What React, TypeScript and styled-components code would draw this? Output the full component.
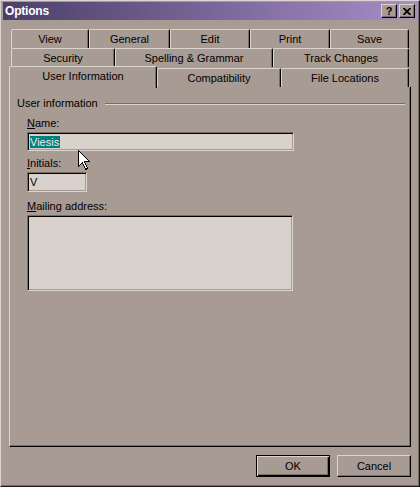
import styled, { createGlobalStyle } from 'styled-components';

const face = '#a89b93';
const light = '#dcd4cf';
const shadow = '#7a6d66';
const dark = '#000';
const fieldBg = '#d9d1cc';

const GlobalStyle = createGlobalStyle`
	html, body {
		margin: 0;
		padding: 0;
		background: ${face};
	}
	body {
		font-family: 'Liberation Sans', Arial, sans-serif;
		font-size: 11px;
		color: #000;
	}
`;

const tabRows: { label: string; w: number }[][] = [
	[
		{ label: 'View', w: 78 },
		{ label: 'General', w: 81 },
		{ label: 'Edit', w: 80 },
		{ label: 'Print', w: 80 },
		{ label: 'Save', w: 79 },
	],
	[
		{ label: 'Security', w: 104 },
		{ label: 'Spelling & Grammar', w: 158 },
		{ label: 'Track Changes', w: 136 },
	],
];

const frontRow = [
	{ label: 'User Information', w: 148, active: true },
	{ label: 'Compatibility', w: 124 },
	{ label: 'File Locations', w: 128 },
];

function Cursor() {
	return (
		<Pointer width='13' height='21' viewBox='0 0 13 21'>
			<path
				d='M0.5 0.5 L0.5 16.5 L4.5 12.5 L7.5 19.5 L9.5 18.5 L6.5 11.5 L11.5 11.5 Z'
				fill='#fff'
				stroke='#000'
				strokeWidth='1'
				shapeRendering='crispEdges'
			/>
		</Pointer>
	);
}

function App() {
	return (
		<>
			<GlobalStyle />
			<Window>
				<TitleBar>
					<Caption>Options</Caption>
					<CaptionButtons>
						<CaptionButton>?</CaptionButton>
						<CaptionButton>
							<svg width='8' height='7' viewBox='0 0 8 7'>
								<path d='M0.5 0 L7.5 7 M7.5 0 L0.5 7' stroke='#000' strokeWidth='1.8' />
							</svg>
						</CaptionButton>
					</CaptionButtons>
				</TitleBar>
				<Body>
					<Tabs>
						{tabRows.map((row, i) => (
							<TabRow key={i}>
								{row.map((t) => (
									<Tab key={t.label} $w={t.w}>
										{t.label}
									</Tab>
								))}
							</TabRow>
						))}
						<FrontRow>
							{frontRow.map((t) => (
								<Tab key={t.label} $w={t.w} $active={t.active}>
									{t.label}
								</Tab>
							))}
						</FrontRow>
					</Tabs>
					<Panel>
						<GroupHeader>
							<span>User information</span>
							<Etch />
						</GroupHeader>
						<Fields>
							<Label $gap={7}>
								<u>N</u>ame:
							</Label>
							<Field $w={267} $h={19}>
								<Selected>Viesis</Selected>
							</Field>
							<Label $gap={6}>
								<u>I</u>nitials:
							</Label>
							<Field $w={60} $h={20}>
								V
							</Field>
							<Label $gap={8}>
								<u>M</u>ailing address:
							</Label>
							<Field $w={266} $h={76} />
						</Fields>
					</Panel>
					<Buttons>
						<PushButton $default>OK</PushButton>
						<PushButton>Cancel</PushButton>
					</Buttons>
				</Body>
				<Cursor />
			</Window>
		</>
	);
}

const Window = styled.div`
	position: relative;
	box-sizing: border-box;
	width: 420px;
	height: 487px;
	padding: 1px 2px 2px 2px;
	background: ${face};
	border: 1px solid;
	border-color: ${light} #1c1714 #1c1714 ${light};
	box-shadow: inset -1px -1px ${shadow};
	display: flex;
	flex-direction: column;
`;

const TitleBar = styled.div`
	height: 18px;
	display: flex;
	align-items: center;
	justify-content: space-between;
	padding: 0 2px;
	background: linear-gradient(to right, #4b3f69, #a88dc7);
`;

const Caption = styled.span`
	color: #fff;
	font-weight: bold;
	font-size: 12px;
	letter-spacing: -0.2px;
`;

const CaptionButtons = styled.div`
	display: flex;
	gap: 2px;
`;

const CaptionButton = styled.div`
	box-sizing: border-box;
	width: 16px;
	height: 14px;
	display: flex;
	align-items: center;
	justify-content: center;
	background: ${face};
	border: 1px solid;
	border-color: ${light} ${dark} ${dark} ${light};
	box-shadow: inset -1px -1px ${shadow};
	font-weight: bold;
	font-size: 11px;
	line-height: 11px;
`;

const Body = styled.div`
	flex: 1;
	display: flex;
	flex-direction: column;
	padding: 9px 6px 0 6px;
`;

const Tabs = styled.div`
	display: flex;
	flex-direction: column;
`;

const TabRow = styled.div`
	display: flex;
	height: 19px;
	margin: 0 2px;
`;

const FrontRow = styled.div`
	display: flex;
	height: 20px;
	position: relative;
	z-index: 1;
`;

const Tab = styled.div<{ $w: number; $active?: boolean }>`
	box-sizing: border-box;
	width: ${(p) => p.$w}px;
	height: ${(p) => (p.$active ? 22 : 19)}px;
	margin-top: ${(p) => (p.$active ? -1 : 1)}px;
	margin-left: ${(p) => (p.$active ? 0 : 0)}px;
	padding-top: 3px;
	text-align: center;
	line-height: 13px;
	white-space: nowrap;
	background: ${face};
	border-top: 1px solid ${light};
	border-left: 1px solid ${light};
	border-right: 1px solid ${dark};
	border-top-left-radius: 2px;
	border-top-right-radius: 2px;
	box-shadow: inset -1px 0 ${shadow};
	${TabRow} & {
		margin-top: 0;
	}
	${TabRow} &:first-child {
		margin-left: 0;
	}
`;

const Panel = styled.div`
	box-sizing: border-box;
	height: 361px;
	margin-top: -1px;
	padding: 10px 5px 0 7px;
	border: 1px solid;
	border-color: ${light} ${dark} ${dark} ${light};
	box-shadow: inset -1px -1px ${shadow};
`;

const GroupHeader = styled.div`
	display: flex;
	align-items: center;
	line-height: 13px;
	gap: 7px;
`;

const Etch = styled.div`
	flex: 1;
	height: 1px;
	margin-top: 1px;
	background: ${shadow};
	border-bottom: 1px solid ${light};
`;

const Fields = styled.div`
	display: flex;
	flex-direction: column;
	align-items: flex-start;
	padding-left: 10px;
`;

const Label = styled.div<{ $gap: number }>`
	margin-top: ${(p) => p.$gap}px;
	margin-bottom: 2px;
	line-height: 13px;
	u {
		text-decoration-thickness: 1px;
		text-underline-offset: 1px;
	}
`;

const Field = styled.div<{ $w: number; $h: number }>`
	box-sizing: border-box;
	width: ${(p) => p.$w}px;
	height: ${(p) => p.$h}px;
	padding: 3px 2px 0 2px;
	line-height: 13px;
	background: ${fieldBg};
	border: 1px solid;
	border-color: ${shadow} ${light} ${light} ${shadow};
	box-shadow: inset 1px 1px ${dark}, inset -1px -1px ${face};
`;

const Selected = styled.span`
	display: inline-block;
	background: #008080;
	color: #f2eeea;
	padding: 0 1px 0 0;
	line-height: 12px;
`;

const Buttons = styled.div`
	display: flex;
	justify-content: flex-end;
	gap: 7px;
	margin-top: 8px;
	padding-right: 0;
`;

const PushButton = styled.div<{ $default?: boolean }>`
	box-sizing: border-box;
	width: 74px;
	height: 22px;
	display: flex;
	align-items: center;
	justify-content: center;
	background: ${face};
	border: 1px solid;
	border-color: ${(p) => (p.$default ? dark : `${light} ${dark} ${dark} ${light}`)};
	box-shadow: ${(p) =>
		p.$default
			? `inset 1px 1px ${light}, inset -1px -1px ${dark}, inset -2px -2px ${shadow}`
			: `inset -1px -1px ${shadow}`};
`;

const Pointer = styled.svg`
	position: absolute;
	left: 77px;
	top: 149px;
`;

export default App;
